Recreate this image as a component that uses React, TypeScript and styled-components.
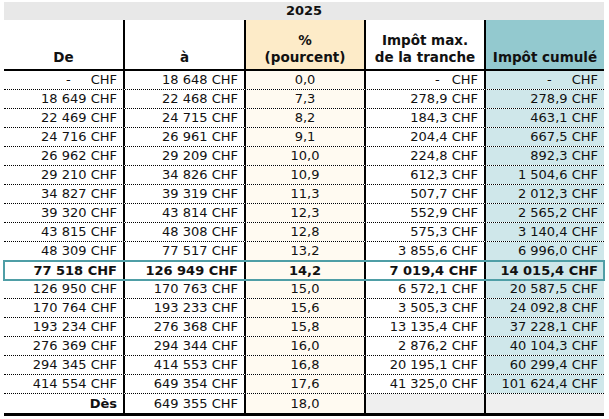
import React from "react";
import styled, { createGlobalStyle } from "styled-components";

const teal = "#4f9ea6";

const GlobalStyle = createGlobalStyle`
  html, body {
    margin: 0;
    padding: 0;
    background: #ffffff;
  }
  body {
    font-family: "DejaVu Sans", "Liberation Sans", sans-serif;
    font-size: 13px;
    color: #111;
  }
`;

const Page = styled.div`
  padding: 2px 5px 0 4px;
`;

const Table = styled.div`
  width: 600px;
  border-bottom: 3px solid #000;
`;

const Title = styled.div`
  height: 18px;
  background: #e8e8e8;
  font-weight: bold;
  text-align: center;
  line-height: 18px;
`;

const HeaderRow = styled.div`
  display: grid;
  grid-template-columns: 121px 121px 120px 120px 118px;
  height: 49px;
  border-bottom: 2px solid #000;
`;

const HeadCell = styled.div<{ $bg?: string; $last?: boolean }>`
  display: flex;
  flex-direction: column;
  justify-content: flex-end;
  align-items: center;
  text-align: center;
  font-weight: bold;
  font-size: 13.5px;
  line-height: 17px;
  padding-bottom: 3px;
  background: ${(p) => p.$bg || "transparent"};
  border-right: ${(p) => (p.$last ? "none" : "2px solid #000")};
`;

const Row = styled.div<{ $hl?: boolean; $end?: boolean }>`
  display: grid;
  grid-template-columns: 121px 121px 120px 120px 118px;
  height: 19px;
  box-sizing: border-box;
  border-bottom: ${(p) => (p.$end ? "none" : "1px dotted #000")};
  position: relative;
  font-weight: ${(p) => (p.$hl ? "bold" : "normal")};
  ${(p) =>
    p.$hl &&
    `
    z-index: 1;
    outline: 2px solid ${teal};
    outline-offset: -1px;
    border-bottom: none;
  `}
`;

const Cell = styled.div<{ $bg?: string; $center?: boolean; $last?: boolean; $bold?: boolean }>`
  display: flex;
  align-items: center;
  justify-content: ${(p) => (p.$center ? "center" : "flex-end")};
  padding-right: ${(p) => (p.$center ? "0" : "6px")};
  white-space: nowrap;
  line-height: 18px;
  background: ${(p) => p.$bg || "transparent"};
  border-right: ${(p) => (p.$last ? "none" : "2px solid #000")};
  font-weight: ${(p) => (p.$bold ? "bold" : "inherit")};
`;

const Dash = styled.span<{ $gap: number }>`
  margin-right: ${(p) => p.$gap}px;
`;

const pctBg = "#fffaf1";
const pctHead = "#fdebc8";
const cumBg = "#cfe7ea";
const cumHead = "#93c9cf";
const grey = "#efefef";

type R = [string, string, string, string, string];

const rows: R[] = [
  ["-", "18 648", "0,0", "-", "-"],
  ["18 649", "22 468", "7,3", "278,9", "278,9"],
  ["22 469", "24 715", "8,2", "184,3", "463,1"],
  ["24 716", "26 961", "9,1", "204,4", "667,5"],
  ["26 962", "29 209", "10,0", "224,8", "892,3"],
  ["29 210", "34 826", "10,9", "612,3", "1 504,6"],
  ["34 827", "39 319", "11,3", "507,7", "2 012,3"],
  ["39 320", "43 814", "12,3", "552,9", "2 565,2"],
  ["43 815", "48 308", "12,8", "575,3", "3 140,4"],
  ["48 309", "77 517", "13,2", "3 855,6", "6 996,0"],
  ["77 518", "126 949", "14,2", "7 019,4", "14 015,4"],
  ["126 950", "170 763", "15,0", "6 572,1", "20 587,5"],
  ["170 764", "193 233", "15,6", "3 505,3", "24 092,8"],
  ["193 234", "276 368", "15,8", "13 135,4", "37 228,1"],
  ["276 369", "294 344", "16,0", "2 876,2", "40 104,3"],
  ["294 345", "414 553", "16,8", "20 195,1", "60 299,4"],
  ["414 554", "649 354", "17,6", "41 325,0", "101 624,4"],
];

function chf(v: string, gap: number) {
  if (v === "-") {
    return (
      <>
        <Dash $gap={gap}>-</Dash>CHF
      </>
    );
  }
  return `${v} CHF`;
}

export default function App() {
  return (
    <Page>
      <GlobalStyle />
      <Table>
        <Title>2025</Title>
        <HeaderRow>
          <HeadCell>De</HeadCell>
          <HeadCell>à</HeadCell>
          <HeadCell $bg={pctHead}>
            <span>%</span>
            <span>(pourcent)</span>
          </HeadCell>
          <HeadCell>
            <span>Impôt max.</span>
            <span>de la tranche</span>
          </HeadCell>
          <HeadCell $bg={cumHead} $last>
            Impôt cumulé
          </HeadCell>
        </HeaderRow>
        {rows.map((r, i) => (
          <Row key={i} $hl={i === 10}>
            <Cell>{chf(r[0], 20)}</Cell>
            <Cell>{chf(r[1], 0)}</Cell>
            <Cell $bg={pctBg} $center>
              {r[2]}
            </Cell>
            <Cell>{chf(r[3], 12)}</Cell>
            <Cell $bg={cumBg} $last>
              {chf(r[4], 20)}
            </Cell>
          </Row>
        ))}
        <Row $end>
          <Cell $bold>Dès</Cell>
          <Cell>649 355 CHF</Cell>
          <Cell $bg={pctBg} $center>
            18,0
          </Cell>
          <Cell $bg={grey} />
          <Cell $bg={grey} $last />
        </Row>
      </Table>
    </Page>
  );
}
